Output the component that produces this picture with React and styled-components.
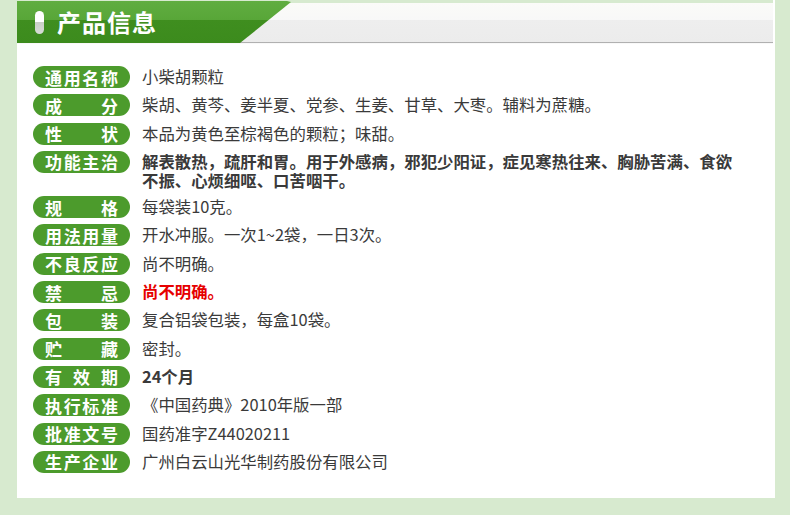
import React from 'react'
import styled, { createGlobalStyle } from 'styled-components'

const GlobalStyle = createGlobalStyle`
  html, body {
    margin: 0;
    padding: 0;
    background: #d7eacf;
  }
  body {
    font-family: "Noto Sans CJK SC", "Noto Sans", sans-serif;
  }
`;

const rows = [
  { label: '通用名称', value: '小柴胡颗粒' },
  { label: '成分', value: '柴胡、黄芩、姜半夏、党参、生姜、甘草、大枣。辅料为蔗糖。' },
  { label: '性状', value: '本品为黄色至棕褐色的颗粒；味甜。' },
  { label: '功能主治', value: '解表散热，疏肝和胃。用于外感病，邪犯少阳证，症见寒热往来、胸胁苦满、食欲不振、心烦细呕、口苦咽干。', bold: true },
  { label: '规格', value: '每袋装10克。' },
  { label: '用法用量', value: '开水冲服。一次1~2袋，一日3次。' },
  { label: '不良反应', value: '尚不明确。' },
  { label: '禁忌', value: '尚不明确。', bold: true, red: true },
  { label: '包装', value: '复合铝袋包装，每盒10袋。' },
  { label: '贮藏', value: '密封。' },
  { label: '有效期', value: '24个月', bold: true },
  { label: '执行标准', value: '《中国药典》2010年版一部' },
  { label: '批准文号', value: '国药准字Z44020211' },
  { label: '生产企业', value: '广州白云山光华制药股份有限公司' },
];

export default function App() {
  return (
    <Page>
      <GlobalStyle />
      <Card>
        <Header>
          <Tab>
            <Capsule />
            <Title>产品信息</Title>
          </Tab>
        </Header>
        <List>
          {rows.map((row) => (
            <Row key={row.label}>
              <Label>
                {row.label.split('').map((ch, i) => <span key={i}>{ch}</span>)}
              </Label>
              <Value $bold={row.bold} $red={row.red}>{row.value}</Value>
            </Row>
          ))}
        </List>
      </Card>
    </Page>
  )
}

const Page = styled.div`
  width: 790px;
  height: 515px;
  padding: 0 15px 0 17px;
  box-sizing: border-box;
  overflow: hidden;
`;

const Card = styled.div`
  background: #ffffff;
  height: 498px;
  box-sizing: border-box;
  padding-bottom: 24px;
`;

const Header = styled.div`
  height: 44px;
  display: flex;
  background: linear-gradient(
    to bottom,
    #d7eacf 0,
    #d7eacf 3px,
    #fbfbf8 3px,
    #f8f8f8 20px,
    #eeeeee 20px,
    #ececec 42px,
    #a9a9a9 42px,
    #b8b8b8 43px,
    #f2f2f2 43px,
    #ffffff 44px
  );
  margin-right: 2px;
`;

const Tab = styled.div`
  width: 274px;
  height: 42px;
  margin-top: 1px;
  display: flex;
  align-items: center;
  padding-left: 18px;
  box-sizing: border-box;
  gap: 13px;
  background: linear-gradient(to bottom, #60ad40 0, #58a638 19px, #3f8e1f 19px, #3c8b1d 42px);
  clip-path: polygon(0 0, 270px 0, 274px 1px, 223px 100%, 0 100%);
`;

const Capsule = styled.div`
  width: 9px;
  height: 23px;
  border-radius: 5px;
  background: linear-gradient(to bottom, #ffffff 0, #ffffff 50%, #c9cfc6 50%, #d8dcd6 100%);
`;

const Title = styled.div`
  color: #ffffff;
  font-size: 24px;
  font-weight: 700;
  letter-spacing: 1px;
  line-height: 1;
`;

const List = styled.div`
  display: flex;
  flex-direction: column;
  gap: 6.3px;
  padding: 22px 0 0 16px;
`;

const Row = styled.div`
  display: flex;
  align-items: flex-start;
  gap: 12px;
`;

const Label = styled.div`
  flex: 0 0 97px;
  height: 22px;
  border-radius: 11px;
  background: #4c9b2c;
  color: #ffffff;
  font-size: 17px;
  font-weight: 700;
  display: flex;
  align-items: center;
  justify-content: space-between;
  padding: 0 12px;
  box-sizing: border-box;
  line-height: 1;
`;

const Value = styled.div`
  flex: 1;
  padding: 1px 38px 0 0;
  font-size: 16.4px;
  line-height: 19px;
  color: ${(p) => (p.$red ? '#e60000' : '#3a3a3a')};
  font-weight: ${(p) => (p.$bold ? 700 : 400)};
`;
